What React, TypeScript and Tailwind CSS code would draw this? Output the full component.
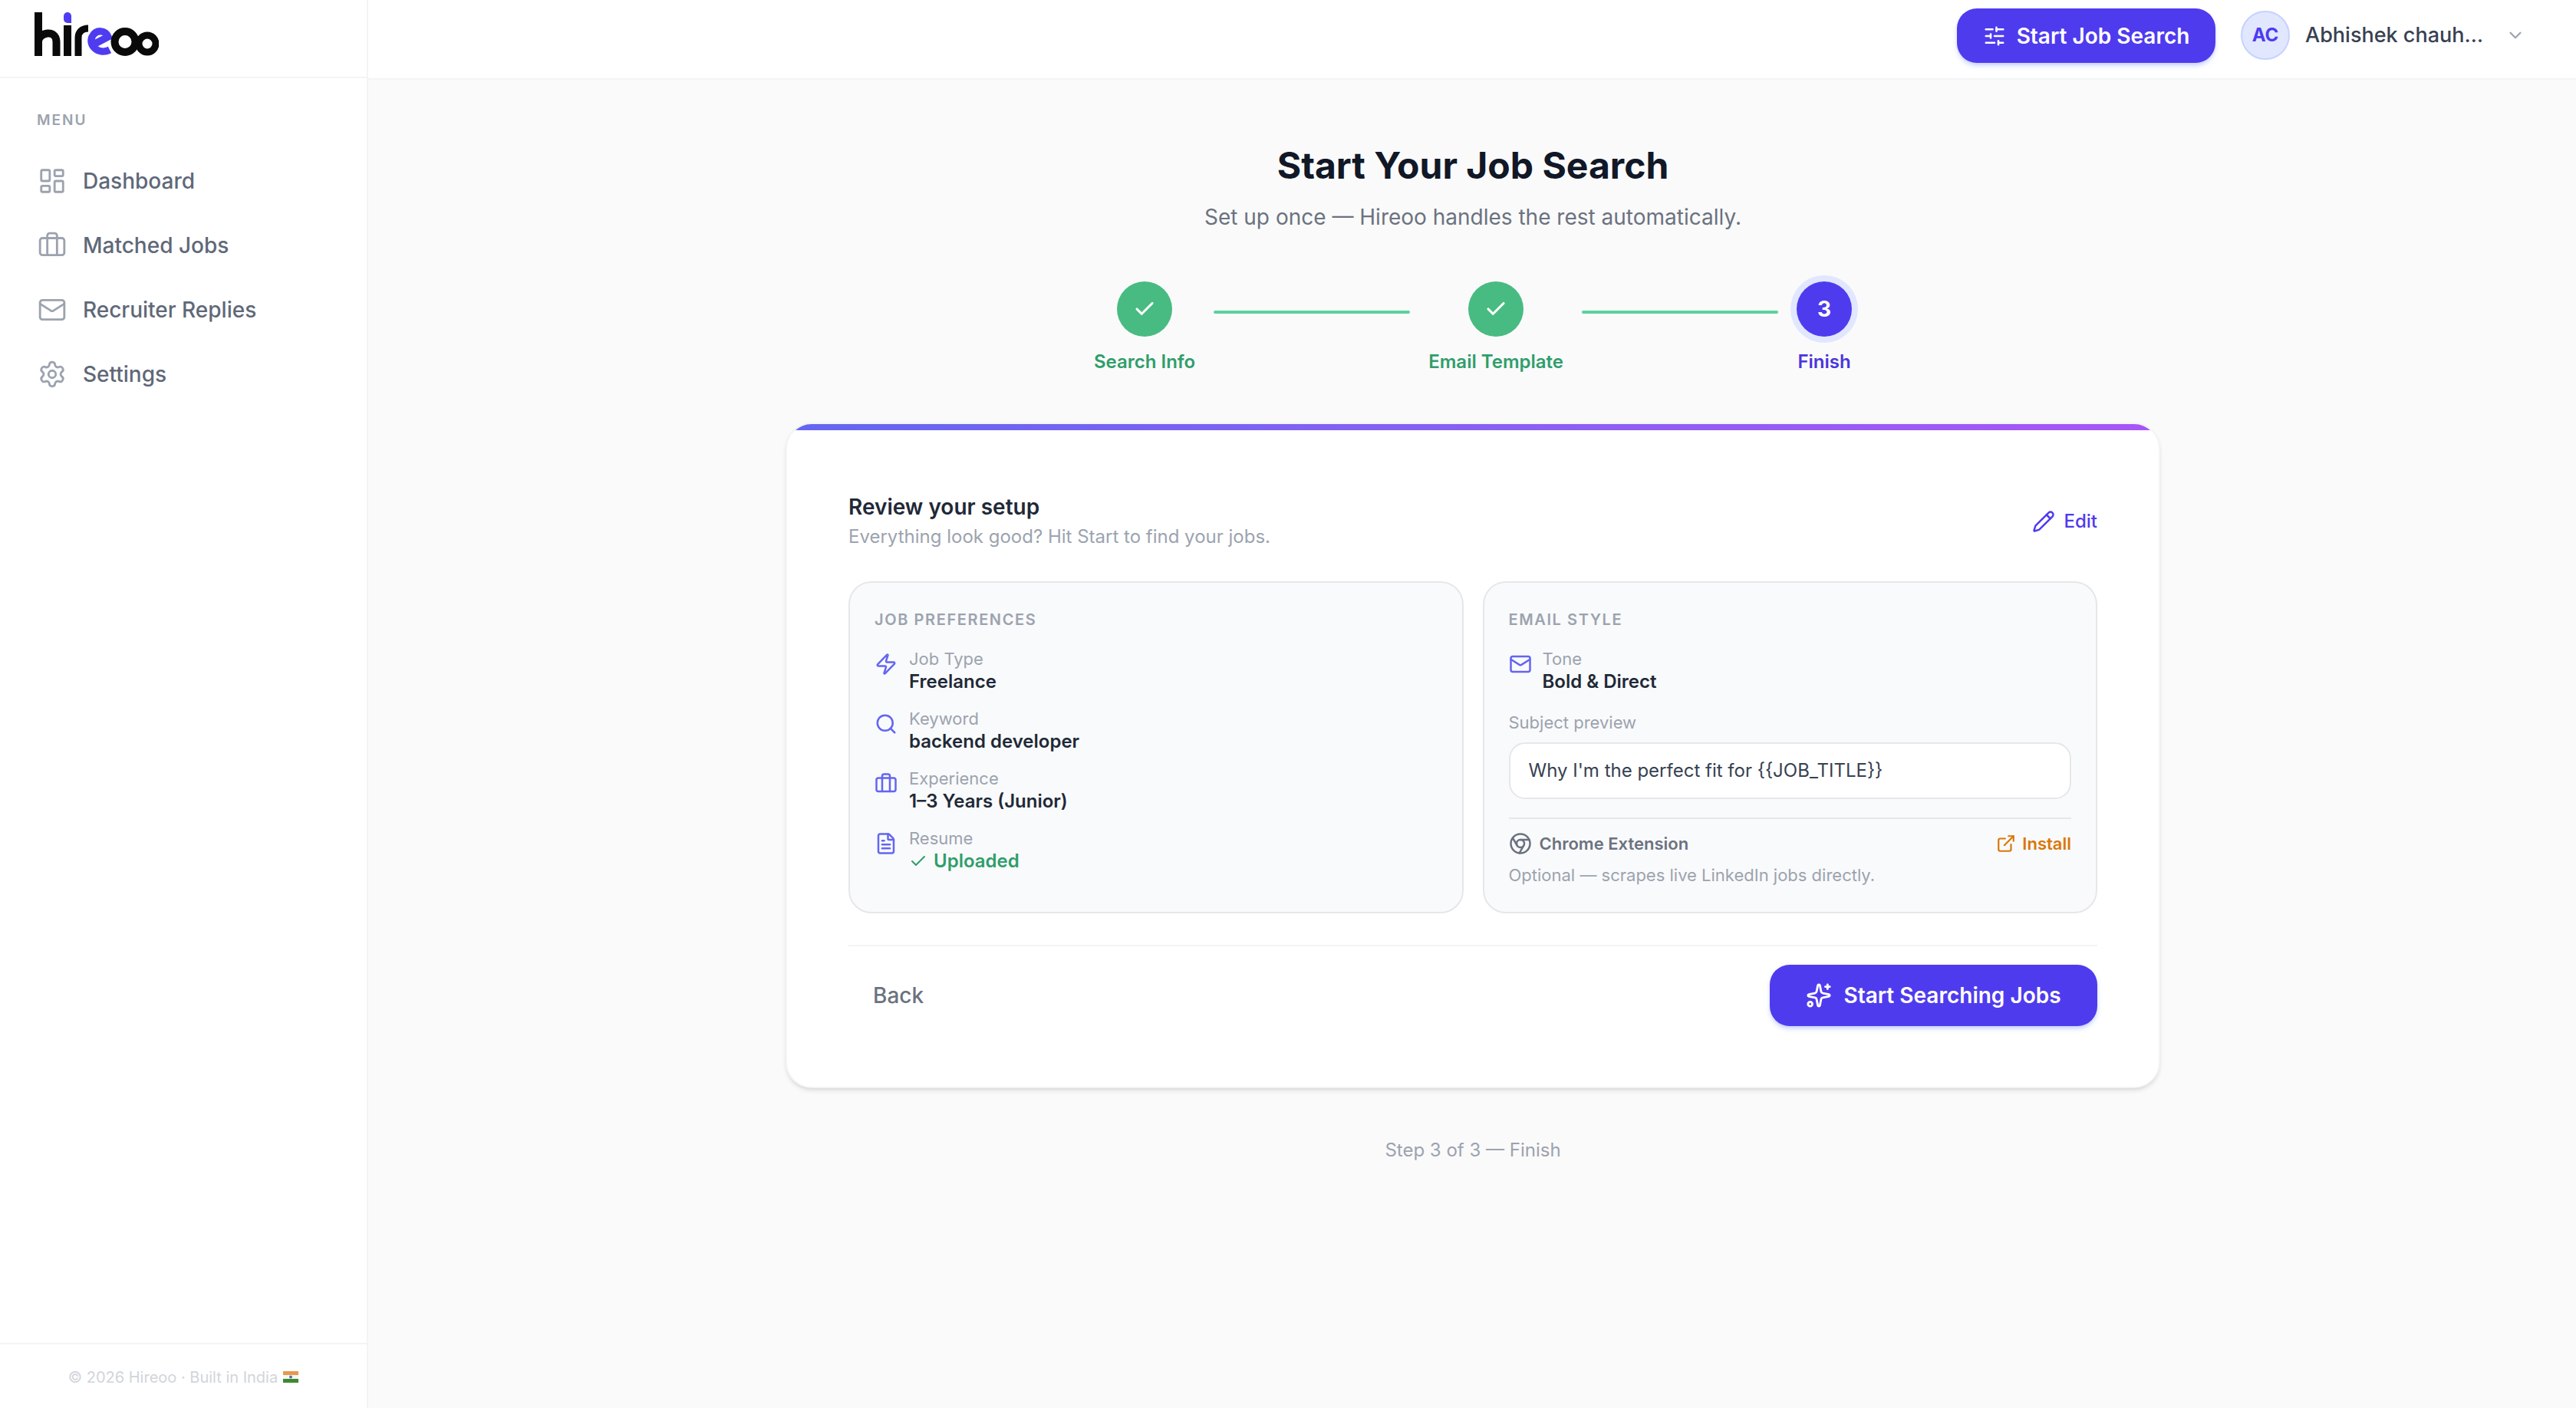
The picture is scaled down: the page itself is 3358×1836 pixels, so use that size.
import {
  Briefcase,
  Check,
  ChevronDown,
  Chrome,
  ExternalLink,
  FileText,
  LayoutDashboard,
  Mail,
  Pencil,
  Search,
  Settings,
  SlidersHorizontal,
  Sparkles,
  Zap,
} from "lucide-react";

const navItems = [
  { label: "Dashboard", icon: LayoutDashboard },
  { label: "Matched Jobs", icon: Briefcase },
  { label: "Recruiter Replies", icon: Mail },
  { label: "Settings", icon: Settings },
];

const prefs = [
  { label: "Job Type", value: "Freelance", icon: Zap },
  { label: "Keyword", value: "backend developer", icon: Search },
  { label: "Experience", value: "1–3 Years (Junior)", icon: Briefcase },
];

function Logo() {
  return (
    <svg width="162" height="57" viewBox="0 0 162 57" fill="none">
      <rect x="0" y="0" width="10" height="57" fill="#0a0a0a" />
      <path d="M5 38C6 26 28 22 28.500 38V57" stroke="#0a0a0a" strokeWidth="10" />
      <rect x="38" y="17" width="10" height="40" fill="#0a0a0a" />
      <path d="M38 5a5 5 0 0 1 10 0v9h-5a5 5 0 0 1-5-5z" fill="#4f3cf0" />
      <path d="M57 57V33C57 26 62 21 70 21" stroke="#0a0a0a" strokeWidth="9" />
      <path d="M73 44L96 32C93 23 80 22 75 32C70 44 84 56 98 49" stroke="#4f3cf0" strokeWidth="9.500" />
      <circle cx="118" cy="38.500" r="13.500" stroke="#0a0a0a" strokeWidth="10" />
      <circle cx="147" cy="41" r="11" stroke="#0a0a0a" strokeWidth="9" />
    </svg>
  );
}

function IndiaFlag() {
  return (
    <svg width="20" height="15" viewBox="0 0 20 15" className="ml-[7px] shrink-0">
      <rect width="20" height="5" fill="#e59a4e" />
      <rect y="5" width="20" height="5" fill="#f5f5f5" />
      <rect y="10" width="20" height="5" fill="#3c8a2e" />
      <circle cx="10" cy="7.500" r="2" fill="#5a6ea8" />
    </svg>
  );
}

function Step({ label, done, num }: { label: string; done?: boolean; num?: number }) {
  return (
    <div className="flex flex-col items-center">
      {done ? (
        <div className="flex h-[72px] w-[72px] items-center justify-center rounded-full bg-[#48bb82]">
          <Check className="h-[30px] w-[30px] text-white" strokeWidth={2.5} />
        </div>
      ) : (
        <div className="flex h-[72px] w-[72px] items-center justify-center rounded-full bg-[#4f3bee] text-[28px] font-bold text-white ring-[8px] ring-[#e0e7ff]">
          {num}
        </div>
      )}
      <span className={`mt-[16px] text-[24px] leading-[34px] font-semibold ${done ? "text-[#2f9e6b]" : "text-[#4a35dc]"}`}>
        {label}
      </span>
    </div>
  );
}

function Connector() {
  return <div className="mx-[24px] mt-[38px] h-[4px] w-[256px] rounded-full bg-[#5ad29b]" />;
}

export default function App() {
  return (
    <div className="flex h-screen w-full overflow-hidden bg-[#fafafa] font-['Inter',sans-serif]">
      <aside className="flex w-[480px] shrink-0 flex-col border-r-2 border-[#f3f4f6] bg-white">
        <div className="flex h-[102px] items-start border-b-2 border-[#f3f4f6] pt-[16px] pl-[45px]">
          <Logo />
        </div>
        <div className="flex-1 px-[48px] pt-[42px]">
          <p className="text-[19px] leading-[26px] font-semibold tracking-[2px] text-[#9ca3af]">MENU</p>
          <nav className="mt-[42px] flex flex-col gap-[36px]">
            {navItems.map((item) => (
              <div key={item.label} className="flex h-[48px] items-center gap-[21px] pl-[1px]">
                <item.icon className="h-[38px] w-[38px] text-[#9ca3af]" strokeWidth={1.8} />
                <span className="text-[28px] font-medium text-[#5f6878]">{item.label}</span>
              </div>
            ))}
          </nav>
        </div>
        <div className="flex h-[85px] items-center justify-center border-t-2 border-[#f3f4f6] pt-[2px] text-[20px] text-[#d1d5db]">
          © 2026 Hireoo · Built in India
          <IndiaFlag />
        </div>
      </aside>

      <div className="flex min-w-0 flex-1 flex-col">
        <header className="flex h-[104px] shrink-0 items-start justify-end border-b-2 border-[#f3f4f6] bg-white pt-[11px] pr-[66px]">
          <button className="flex h-[71px] w-[337px] items-center justify-center gap-[14px] rounded-[26px] bg-[#4f3bee] text-[28px] font-semibold text-white shadow-md shadow-indigo-200">
            <SlidersHorizontal className="h-[30px] w-[30px]" strokeWidth={2} />
            Start Job Search
          </button>
          <div className="mt-[3px] ml-[33px] flex h-[64px] items-center">
            <div className="flex h-[64px] w-[64px] items-center justify-center rounded-full border-2 border-[#c7d2fe] bg-[#e0e7ff] text-[24px] font-bold text-[#4f3bee]">
              AC
            </div>
            <span className="ml-[20px] w-[236px] text-[27px] font-medium whitespace-nowrap text-[#374151]">
              Abhishek chauh…
            </span>
            <ChevronDown className="ml-[25px] h-[26px] w-[26px] text-[#9ca3af]" strokeWidth={2} />
          </div>
        </header>

        <main className="flex flex-1 flex-col items-center pt-[78px] pl-[2px]">
          <h1 className="text-[48px] leading-[68px] font-bold text-[#111827]">Start Your Job Search</h1>
          <p className="mt-[11px] text-[28px] leading-[44px] text-[#6b7280]">
            Set up once — Hireoo handles the rest automatically.
          </p>

          <div className="mt-[62px] flex items-start">
            <Step label="Search Info" done />
            <Connector />
            <Step label="Email Template" done />
            <Connector />
            <Step label="Finish" num={3} />
          </div>

          <section className="mt-[62px] flex h-[868px] w-[1792px] flex-col overflow-hidden rounded-[34px] border-2 border-[#f3f4f6] bg-white shadow-md">
            <div className="h-[8px] bg-gradient-to-r from-[#6366f1] to-[#a855f7]" />
            <div className="flex flex-1 flex-col px-[80px] pt-[80px]">
              <div className="flex items-center justify-between">
                <div>
                  <h2 className="text-[28px] leading-[40px] font-semibold text-[#1f2937]">Review your setup</h2>
                  <p className="text-[24px] leading-[38px] text-[#9ca3af]">
                    Everything look good? Hit Start to find your jobs.
                  </p>
                </div>
                <div className="flex items-center gap-[11px] text-[24px] font-medium text-[#4f3bee]">
                  <Pencil className="h-[30px] w-[30px]" strokeWidth={2} />
                  Edit
                </div>
              </div>

              <div className="mt-[39px] grid h-[433px] grid-cols-2 gap-[25px]">
                <div className="rounded-[30px] border-2 border-[#e5e7eb] bg-[#f9fafb] px-[32px] pt-[32px]">
                  <p className="text-[20px] leading-[32px] font-semibold tracking-[1.600px] text-[#9ca3af] uppercase">
                    Job Preferences
                  </p>
                  <div className="mt-[20px] flex flex-col gap-[18px]">
                    {prefs.map((p) => (
                      <div key={p.label} className="flex items-start gap-[15px]">
                        <p.icon className="mt-[7px] h-[30px] w-[30px] shrink-0 text-[#6366f1]" strokeWidth={2} />
                        <div>
                          <p className="text-[22px] leading-[30px] text-[#9ca3af]">{p.label}</p>
                          <p className="text-[24px] leading-[30px] font-semibold text-[#1f2937]">{p.value}</p>
                        </div>
                      </div>
                    ))}
                    <div className="flex items-start gap-[15px]">
                      <FileText className="mt-[7px] h-[30px] w-[30px] shrink-0 text-[#6366f1]" strokeWidth={2} />
                      <div>
                        <p className="text-[22px] leading-[30px] text-[#9ca3af]">Resume</p>
                        <p className="flex items-center gap-[8px] text-[24px] leading-[30px] font-semibold text-[#2f9e6b]">
                          <Check className="h-[24px] w-[24px]" strokeWidth={2} />
                          Uploaded
                        </p>
                      </div>
                    </div>
                  </div>
                </div>

                <div className="rounded-[30px] border-2 border-[#e5e7eb] bg-[#f9fafb] px-[32px] pt-[32px]">
                  <p className="text-[20px] leading-[32px] font-semibold tracking-[1.600px] text-[#9ca3af] uppercase">
                    Email Style
                  </p>
                  <div className="mt-[20px] flex items-start gap-[14px]">
                    <Mail className="mt-[7px] h-[30px] w-[30px] shrink-0 text-[#6366f1]" strokeWidth={2} />
                    <div>
                      <p className="text-[22px] leading-[30px] text-[#9ca3af]">Tone</p>
                      <p className="text-[24px] leading-[30px] font-semibold text-[#1f2937]">Bold &amp; Direct</p>
                    </div>
                  </div>
                  <p className="mt-[23px] text-[22px] leading-[30px] text-[#9ca3af]">Subject preview</p>
                  <div className="mt-[11px] flex h-[74px] items-center rounded-[21px] border-2 border-[#e5e7eb] bg-white px-[24px] text-[24px] text-[#374151]">
                    {"Why I'm the perfect fit for {{JOB_TITLE}}"}
                  </div>
                  <div className="mt-[24px] flex items-center justify-between border-t-2 border-[#e5e7eb] pt-[17px]">
                    <div className="flex items-center gap-[10px] text-[22px] leading-[30px] font-semibold text-[#6b7280]">
                      <Chrome className="h-[30px] w-[30px]" strokeWidth={2} />
                      Chrome Extension
                    </div>
                    <div className="flex items-center gap-[8px] text-[22px] leading-[30px] font-semibold text-[#d97706]">
                      <ExternalLink className="h-[26px] w-[26px]" strokeWidth={2} />
                      Install
                    </div>
                  </div>
                  <p className="mt-[11px] text-[22px] leading-[30px] text-[#9ca3af]">
                    Optional — scrapes live LinkedIn jobs directly.
                  </p>
                </div>
              </div>

              <div className="mt-[41px] flex items-center justify-between border-t-2 border-[#f3f4f6] pt-[24px]">
                <button className="pl-[32px] text-[28px] font-medium text-[#6b7280]">Back</button>
                <button className="flex h-[80px] w-[427px] items-center justify-center gap-[15px] rounded-[26px] bg-[#4f3bee] text-[28px] font-semibold text-white shadow-md shadow-indigo-200">
                  <Sparkles className="h-[34px] w-[34px]" strokeWidth={2} />
                  Start Searching Jobs
                </button>
              </div>
            </div>
          </section>

          <p className="mt-[64px] text-[24px] leading-[34px] text-[#9ca3af]">Step 3 of 3 — Finish</p>
        </main>
      </div>
    </div>
  );
}
